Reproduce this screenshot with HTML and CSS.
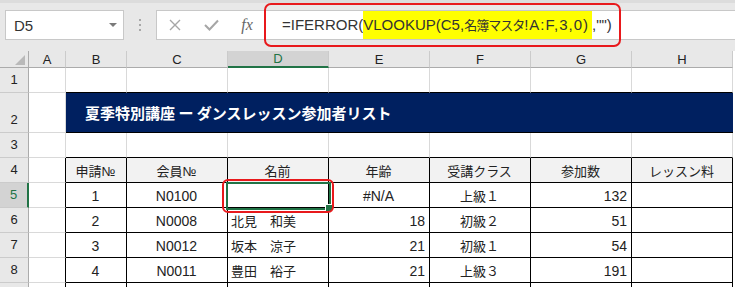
FILE: index.html
```html
<!DOCTYPE html>
<html lang="ja">
<head>
    <meta charset="UTF-8">
    <title>名簿</title>
    <link rel="stylesheet" href="styles.css">
</head>
<body>
    <!-- 数式バー -->
    <div class="toolbar">
        <div class="namebox"><span>D5</span><span class="drop"></span></div>
        <div class="grip"><i></i><i></i><i></i></div>
        <div class="fbar">
            <div class="fbtns">
                <span class="btn">
                    <svg width="12" height="12" viewBox="0 0 12 12"><path d="M1 1L11 11M11 1L1 11" stroke="#a6a6a6" stroke-width="1.4" fill="none"/></svg>
                </span>
                <span class="btn">
                    <svg width="15" height="12" viewBox="0 0 15 12"><path d="M1 6L5.5 10.5L14 1.5" stroke="#a6a6a6" stroke-width="2" fill="none"/></svg>
                </span>
                <span class="btn fx">fx</span>
            </div>
            <div class="finput">=IFERROR(<span class="hl">VLOOKUP(C5,<span class="fjp">名簿マスタ</span><span class="fargs">!A:F,3,0)</span></span>,"")</div>
        </div>
    </div>

    <!-- シート -->
    <div class="sheet">
        <div class="corner"><span class="tri"></span></div>
        <div class="ch">A</div>
        <div class="ch">B</div>
        <div class="ch">C</div>
        <div class="ch on">D</div>
        <div class="ch">E</div>
        <div class="ch">F</div>
        <div class="ch">G</div>
        <div class="ch">H</div>

        <div class="rh">1</div>
        <div class="c"></div>
        <div class="c tt"></div><div class="c tt"></div><div class="c tt"></div><div class="c tt"></div>
        <div class="c tt"></div><div class="c tt"></div><div class="c tt"></div>

        <div class="rh">2</div>
        <div class="c"></div>
        <div class="title">夏季特別講座 ー ダンスレッスン参加者リスト</div>

        <div class="rh">3</div>
        <div class="c"></div>
        <div class="c tt"></div><div class="c tt"></div><div class="c tt"></div><div class="c tt"></div>
        <div class="c tt"></div><div class="c tt"></div><div class="c tt"></div>

        <div class="rh">4</div>
        <div class="c tl"></div>
        <div class="c t th ctr jp">申請№</div>
        <div class="c t th ctr jp">会員№</div>
        <div class="c t th ctr jp">名前</div>
        <div class="c t th ctr jp">年齢</div>
        <div class="c t th ctr jp">受講クラス</div>
        <div class="c t th ctr jp">参加数</div>
        <div class="c t th ctr jp">レッスン料</div>

        <div class="rh on">5</div>
        <div class="c tl"></div>
        <div class="c t ctr">1</div>
        <div class="c t ctr">N0100</div>
        <div class="c t"></div>
        <div class="c t ctr">#N/A</div>
        <div class="c t ctr jp">上級１</div>
        <div class="c t rt">132</div>
        <div class="c t"></div>

        <div class="rh">6</div>
        <div class="c tl"></div>
        <div class="c t ctr">2</div>
        <div class="c t ctr">N0008</div>
        <div class="c t jp">北見　和美</div>
        <div class="c t rt">18</div>
        <div class="c t ctr jp">初級２</div>
        <div class="c t rt">51</div>
        <div class="c t"></div>

        <div class="rh">7</div>
        <div class="c tl"></div>
        <div class="c t ctr">3</div>
        <div class="c t ctr">N0012</div>
        <div class="c t jp">坂本　涼子</div>
        <div class="c t rt">21</div>
        <div class="c t ctr jp">初級１</div>
        <div class="c t rt">54</div>
        <div class="c t"></div>

        <div class="rh">8</div>
        <div class="c tl"></div>
        <div class="c t ctr">4</div>
        <div class="c t ctr">N0011</div>
        <div class="c t jp">豊田　裕子</div>
        <div class="c t rt">21</div>
        <div class="c t ctr jp">上級３</div>
        <div class="c t rt">191</div>
        <div class="c t"></div>

        <div class="rh"></div>
        <div class="c tl"></div>
        <div class="c t"></div><div class="c t"></div><div class="c t"></div><div class="c t"></div>
        <div class="c t"></div><div class="c t"></div><div class="c t"></div>

        <!-- 選択セル D5 -->
        <div class="selbox"></div>
    </div>

    <!-- 赤枠の注釈 -->
    <div class="mark mark-formula"></div>
    <div class="mark mark-cell"></div>
</body>
</html>
```

FILE: styles.css
```css
*{
    margin: 0;
    padding: 0;
    box-sizing: border-box;
}
body{
    width: 735px;
    height: 287px;
    overflow: hidden;
    position: relative;
    background-color: #fff;
    font-family: "Liberation Sans", "Noto Sans CJK JP", sans-serif;
    color: #222;
}

/* 数式バー */
.toolbar{
    height: 51px;
    background-color: #e8e8e8;
    border-top: 3px solid #dcdcdc;
    padding: 7px 0 0 5px;
    display: flex;
    align-items: flex-start;
}
.namebox{
    width: 119px;
    height: 30px;
    background-color: #fff;
    border: 1px solid #c8c8c8;
    display: flex;
    align-items: center;
    justify-content: space-between;
    padding: 1px 6px 0 8px;
    font-size: 15px;
    color: #333;
}
.drop{
    width: 0;
    height: 0;
    border-left: 4px solid transparent;
    border-right: 4px solid transparent;
    border-top: 4px solid #7a7a7a;
    margin-bottom: 2px;
}
.grip{
    width: 32px;
    height: 30px;
    display: flex;
    flex-direction: column;
    align-items: center;
    justify-content: center;
    gap: 3px;
}
.grip i{
    width: 2px;
    height: 2px;
    background-color: #a8a8a8;
}
.fbar{
    flex: 1;
    height: 30px;
    background-color: #fff;
    border: 1px solid #c8c8c8;
    border-right: none;
    display: flex;
}
.fbtns{
    width: 108px;
    display: flex;
}
.btn{
    width: 36px;
    display: flex;
    align-items: center;
    justify-content: center;
}
.fx{
    font-family: "Liberation Serif", serif;
    font-style: italic;
    font-size: 16px;
    color: #666;
}
.finput{
    flex: 1;
    padding-left: 17px;
    font-size: 15px;
    line-height: 27px;
    color: #333;
    white-space: nowrap;
}
.hl{
    display: inline-block;
    background-color: #ffff00;
    padding-right: 3px;
}
.fjp{
    font-size: 13px;
    letter-spacing: -1px;
}
.fargs{
    letter-spacing: 1px;
}

/* シート */
.sheet{
    display: grid;
    grid-template-columns: 29px 37px 61px repeat(6, 101px);
    grid-template-rows: 17px 25px 40px repeat(6, 25px);
    height: 236px;
    overflow: hidden;
    position: relative;
}
.corner{
    background-color: #e8e8e8;
    border-right: 1px solid #ababab;
    border-bottom: 1px solid #ababab;
    display: flex;
    align-items: flex-end;
    justify-content: flex-end;
    padding: 0 3px 2px 0;
}
.tri{
    width: 0;
    height: 0;
    border-left: 10px solid transparent;
    border-bottom: 10px solid #b9b9b9;
}
.ch{
    background-color: #e8e8e8;
    border-right: 1px solid #cbcbcb;
    border-bottom: 1px solid #ababab;
    display: flex;
    align-items: center;
    justify-content: center;
    font-size: 13px;
    color: #222;
}
.ch.on{
    background-color: #d3d3d3;
    border-bottom: 2px solid #217346;
    color: #217346;
}
.rh{
    background-color: #e8e8e8;
    border-right: 1px solid #ababab;
    border-bottom: 1px solid #cbcbcb;
    display: flex;
    align-items: flex-end;
    justify-content: center;
    padding-bottom: 5px;
    font-size: 13px;
    color: #222;
}
.rh.on{
    background-color: #d3d3d3;
    border-right: 2px solid #217346;
    color: #217346;
}
.c{
    border-right: 1px solid #d9d9d9;
    border-bottom: 1px solid #d9d9d9;
    display: flex;
    align-items: center;
    padding: 1px 4px 0 3px;
    font-size: 14px;
    white-space: nowrap;
    overflow: hidden;
}
.ctr{
    justify-content: center;
}
.rt{
    justify-content: flex-end;
}
.jp{
    font-size: 13px;
}
.tt{
    border-bottom-color: #000;
}
.tl{
    border-right-color: #000;
}
.t{
    border-right-color: #000;
    border-bottom-color: #000;
}
.th{
    background-color: #f2f2f2;
}
.title{
    grid-column: span 7;
    background-color: #002060;
    border-bottom: 1px solid #000;
    color: #fff;
    font-family: "Noto Sans CJK JP", sans-serif;
    font-weight: bold;
    font-size: 15px;
    display: flex;
    align-items: center;
    padding-left: 19px;
}
.selbox{
    position: absolute;
    left: 226px;
    top: 131px;
    width: 105px;
    height: 28px;
    border: 2px solid #217346;
}
.selbox::after{
    content: "";
    position: absolute;
    right: -4px;
    bottom: -4px;
    width: 6px;
    height: 6px;
    background-color: #217346;
    border: 1px solid #fff;
}

/* 注釈 */
.mark{
    position: absolute;
    border: 2px solid #e8191c;
    border-radius: 7px;
}
.mark-formula{
    left: 264px;
    top: 3px;
    width: 357px;
    height: 44px;
}
.mark-cell{
    left: 222px;
    top: 179px;
    width: 112px;
    height: 34px;
    border-radius: 6px;
}
```
